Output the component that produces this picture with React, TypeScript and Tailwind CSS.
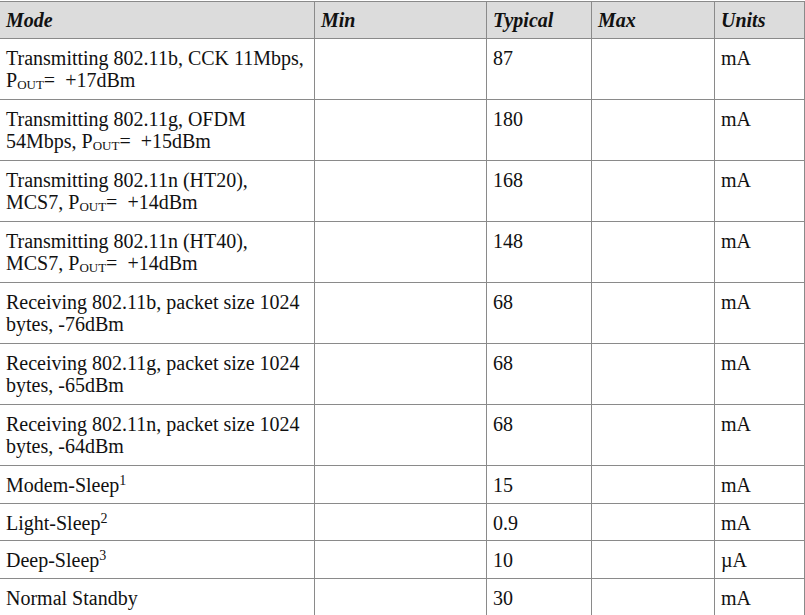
import React from 'react';

type Row = { mode: React.ReactNode; typ: string; unit: string; tall: boolean };

const Pout = () => (
  <>
    P<sub className="text-[13px] align-baseline relative top-[2px]">OUT</sub>=&nbsp;&nbsp;
  </>
);

const Sup = ({ n }: { n: string }) => (
  <sup className="text-[14px] align-baseline relative -top-[7px]">{n}</sup>
);

const rows: Row[] = [
  { mode: <>Transmitting 802.11b, CCK 11Mbps,<br /><Pout />+17dBm</>, typ: '87', unit: 'mA', tall: true },
  { mode: <>Transmitting 802.11g, OFDM<br />54Mbps, <Pout />+15dBm</>, typ: '180', unit: 'mA', tall: true },
  { mode: <>Transmitting 802.11n (HT20),<br />MCS7, <Pout />+14dBm</>, typ: '168', unit: 'mA', tall: true },
  { mode: <>Transmitting 802.11n (HT40),<br />MCS7, <Pout />+14dBm</>, typ: '148', unit: 'mA', tall: true },
  { mode: <>Receiving 802.11b, packet size 1024<br />bytes, -76dBm</>, typ: '68', unit: 'mA', tall: true },
  { mode: <>Receiving 802.11g, packet size 1024<br />bytes, -65dBm</>, typ: '68', unit: 'mA', tall: true },
  { mode: <>Receiving 802.11n, packet size 1024<br />bytes, -64dBm</>, typ: '68', unit: 'mA', tall: true },
  { mode: <>Modem-Sleep<Sup n="1" /></>, typ: '15', unit: 'mA', tall: false },
  { mode: <>Light-Sleep<Sup n="2" /></>, typ: '0.9', unit: 'mA', tall: false },
  { mode: <>Deep-Sleep<Sup n="3" /></>, typ: '10', unit: 'µA', tall: false },
  { mode: <>Normal Standby</>, typ: '30', unit: 'mA', tall: false },
];

const base = 'border border-[#8a8a8a] align-top pl-[6px] pr-1';
const cell = `${base} pt-[8px]`;

export default function App() {
  return (
    <div className="w-[805px] h-[615px] overflow-hidden bg-white font-['Liberation_Serif',serif] text-[20px] leading-[22px] text-[#111]">
      <table className="border-collapse table-fixed -ml-px mt-px w-[805px]">
        <colgroup>
          <col className="w-[315px]" />
          <col className="w-[172px]" />
          <col className="w-[105px]" />
          <col className="w-[123px]" />
          <col className="w-[90px]" />
        </colgroup>
        <thead>
          <tr className="h-[37px] bg-[#dcdcdc]">
            {['Mode', 'Min', 'Typical', 'Max', 'Units'].map(h => (
              <th key={h} className={`${base} pt-[7px] text-left font-bold italic`}>{h}</th>
            ))}
          </tr>
        </thead>
        <tbody>
          {rows.map((r, i) => (
            <tr key={i} className={r.tall ? 'h-[61px]' : 'h-[37.5px]'}>
              <td className={cell}>{r.mode}</td>
              <td className={cell}></td>
              <td className={cell}>{r.typ}</td>
              <td className={cell}></td>
              <td className={cell}>{r.unit}</td>
            </tr>
          ))}
        </tbody>
      </table>
    </div>
  );
}
